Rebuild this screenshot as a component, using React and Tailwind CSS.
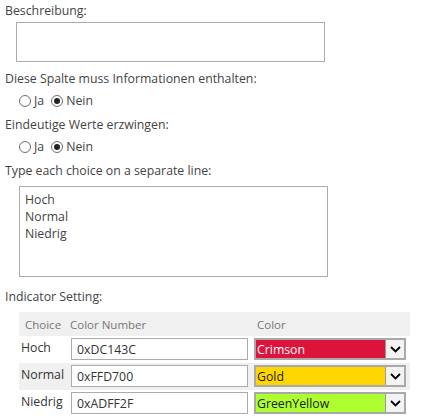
import React from 'react';

const rows = [
  { label: 'Hoch', num: '0xDC143C', color: 'Crimson', bg: 'bg-[#dc143c]', text: 'text-white', shaded: false },
  { label: 'Normal', num: '0xFFD700', color: 'Gold', bg: 'bg-[#ffd700]', text: 'text-[#222]', shaded: true },
  { label: 'Niedrig', num: '0xADFF2F', color: 'GreenYellow', bg: 'bg-[#adff2f]', text: 'text-[#222]', shaded: false },
];

function Radio({ checked, label }) {
  return (
    <span className="flex items-center">
      <span className="w-[12px] h-[12px] rounded-full border border-[#6d6d6d] bg-white flex items-center justify-center">
        {checked && <span className="w-[6px] h-[6px] rounded-full bg-[#222]" />}
      </span>
      <span className="ml-[3px]">{label}</span>
    </span>
  );
}

function RadioRow() {
  return (
    <div className="flex items-center gap-[7px] pl-[14px] h-[17px]">
      <Radio label="Ja" />
      <Radio checked label="Nein" />
    </div>
  );
}

export default function App() {
  return (
    <div
      className="bg-white w-[444px] h-[418px] pl-[5px] pt-[2px] text-[12.3px] leading-[17px] text-[#444]"
      style={{ fontFamily: '"Segoe UI", "Open Sans", sans-serif' }}
    >
      <div>Beschreibung:</div>
      <div className="ml-[11px] mt-[3px] w-[309px] h-[40px] border border-[#ababab]" />

      <div className="mt-[8px]">Diese Spalte muss Informationen enthalten:</div>
      <div className="mt-[5px]">
        <RadioRow />
      </div>

      <div className="mt-[7px]">Eindeutige Werte erzwingen:</div>
      <div className="mt-[5px]">
        <RadioRow />
      </div>

      <div className="mt-[7px]">Type each choice on a separate line:</div>
      <div className="ml-[14px] mt-[7px] w-[309px] h-[91px] border border-[#ababab] px-[5px] pt-[4px]">
        <div>Hoch</div>
        <div>Normal</div>
        <div>Niedrig</div>
      </div>

      <div className="mt-[11px]">Indicator Setting:</div>
      <div className="ml-[14px] mt-[7px] w-[391px]">
        <div className="grid grid-cols-[50px_184px_157px] h-[24px] items-center bg-[#f0f0f0] text-[11.5px] text-[#777]">
          <span className="pl-[6px]">Choice</span>
          <span className="pl-[1px]">Color Number</span>
          <span className="pl-[4px]">Color</span>
        </div>
        {rows.map((r) => (
          <div
            key={r.label}
            className={`grid grid-cols-[50px_184px_157px] h-[27px] items-start ${r.shaded ? 'bg-[#f0f0f0]' : 'bg-white'}`}
          >
            <span className="pt-[3px] pl-[2px] text-[#333]">{r.label}</span>
            <div className="pt-[2px] pl-[2px]">
              <div className="w-[177px] h-[22px] border border-[#ababab] bg-white flex items-center pl-[5px] text-[#333]">
                {r.num}
              </div>
            </div>
            <div className="pt-[2px] pl-[1px]">
              <div className="w-[152px] h-[22px] border-2 border-[#a9a9a9] flex">
                <div className={`flex-1 flex items-center pl-[1px] ${r.bg} ${r.text}`}>{r.color}</div>
                <div className="w-[19px] bg-[#f3f3f3] border-l border-[#9a9a9a] flex items-center justify-center">
                  <svg width="11" height="7" viewBox="0 0 11 7">
                    <path d="M1 1 L5.5 5.5 L10 1" fill="none" stroke="#000" strokeWidth="1.8" />
                  </svg>
                </div>
              </div>
            </div>
          </div>
        ))}
      </div>
    </div>
  );
}
